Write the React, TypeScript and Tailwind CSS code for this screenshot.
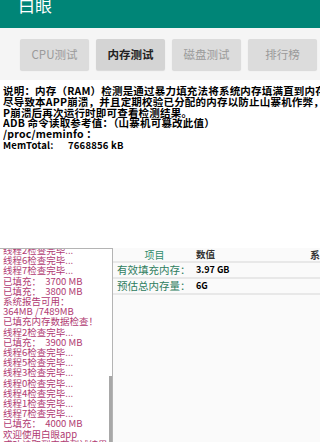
import React from "react";

// -------------------------------------------------------
// DATA
// -------------------------------------------------------

const tabs = [
  { label: "CPU测试", active: false },
  { label: "内存测试", active: true },
  { label: "磁盘测试", active: false },
  { label: "排行榜", active: false },
];

const infoLines = [
  "说明：内存（RAM）检测是通过暴力填充法将系统内存填满直到内存耗",
  "尽导致本APP崩溃，并且定期校验已分配的内存以防止山寨机作弊，AP",
  "P崩溃后再次运行时即可查看检测结果。",
  "ADB 命令读取参考值：（山寨机可篡改此值）",
  "/proc/meminfo ：",
];

const logLines = [
  "线程2检查完毕...",
  "线程6检查完毕...",
  "线程7检查完毕...",
  "已填充：  3700 MB",
  "已填充：  3800 MB",
  "系统报告可用：",
  "364MB /7489MB",
  "已填充内存数据检查！",
  "线程2检查完毕...",
  "已填充：  3900 MB",
  "线程6检查完毕...",
  "线程5检查完毕...",
  "线程3检查完毕...",
  "线程0检查完毕...",
  "线程4检查完毕...",
  "线程1检查完毕...",
  "线程7检查完毕...",
  "已填充：  4000 MB",
  "欢迎使用白眼app",
  "成功读取到内存测试结果！",
];

const rows = [
  { name: "有效填充内存：", value: "3.97 GB" },
  { name: "预估总内存量：", value: "6G" },
];

const cjk = "font-['Noto_Sans_CJK_SC','Noto_Sans',sans-serif]";

// -------------------------------------------------------
// MAIN
// -------------------------------------------------------

export default function App() {
  return (
    <div className={`w-[320px] h-[442px] overflow-hidden bg-white flex flex-col ${cjk}`}>
      {/* ── Action bar ── */}
      <div className="h-[28px] shrink-0 bg-[#008577] overflow-hidden">
        <div className="pl-[18px] -mt-[6px] text-[17px] leading-[22px] text-white">白眼</div>
      </div>

      {/* ── Tabs ── */}
      <div className="h-[52px] shrink-0 bg-[#f5f5f5] flex gap-[7px] pl-[20px] pt-[11px]">
        {tabs.map((t) => (
          <div
            key={t.label}
            className={`w-[69px] h-[31px] rounded-[2px] flex items-center justify-center text-[11.5px] shadow-[0_1px_1px_rgba(0,0,0,0.12)] ${
              t.active ? "bg-[#d4d4d4] text-[#222] font-bold" : "bg-[#dcdcdc] text-[#9a9a9a]"
            }`}
          >
            {t.label}
          </div>
        ))}
      </div>

      {/* ── Description ── */}
      <div className="h-[168px] shrink-0 pt-[6px] pl-[3px] text-black font-bold text-[10.5px] leading-[10.8px] tracking-[0.2px]">
        {infoLines.map((l) => (
          <div key={l} className="whitespace-nowrap overflow-hidden">
            {l}
          </div>
        ))}
        <div className="flex whitespace-nowrap text-[9.5px]">
          <span className="w-[65px]">MemTotal:</span>
          <span>7668856 kB</span>
        </div>
      </div>

      {/* ── Log + result table ── */}
      <div className="flex flex-1 min-h-0 bg-[#fafafa]">
        <div className="relative w-[113px] shrink-0 bg-white border-t border-r border-[#b4b4b4] overflow-hidden">
          <div className="-mt-[4px] pl-[3px] text-[9.5px] leading-[10.2px] text-[#b03a72]">
            {logLines.map((l, i) => (
              <div key={i} className="whitespace-pre">
                {l}
              </div>
            ))}
          </div>
          <div className="absolute right-0 top-[127px] w-[3px] h-[80px] bg-[#a8a8a8]" />
        </div>

        <div className="flex-1 overflow-hidden">
          <div className="flex h-[15px] items-center whitespace-nowrap border-b-2 border-[#e8e8e8] text-[10px]">
            <span className="w-[83px] text-center text-[#2e8a6a]">项目</span>
            <span className="w-[114px] font-bold text-[#333] text-[9.5px]">数值</span>
            <span className="text-[#333] font-bold">系</span>
          </div>
          {rows.map((r) => (
            <div key={r.name} className="flex h-[16px] items-center whitespace-nowrap border-b-2 border-[#e8e8e8]">
              <span className="w-[83px] pl-[4px] text-[10.5px] text-[#2e7d5e]">{r.name}</span>
              <span className="font-bold text-[9px] text-black">{r.value}</span>
            </div>
          ))}
        </div>
      </div>
    </div>
  );
}
